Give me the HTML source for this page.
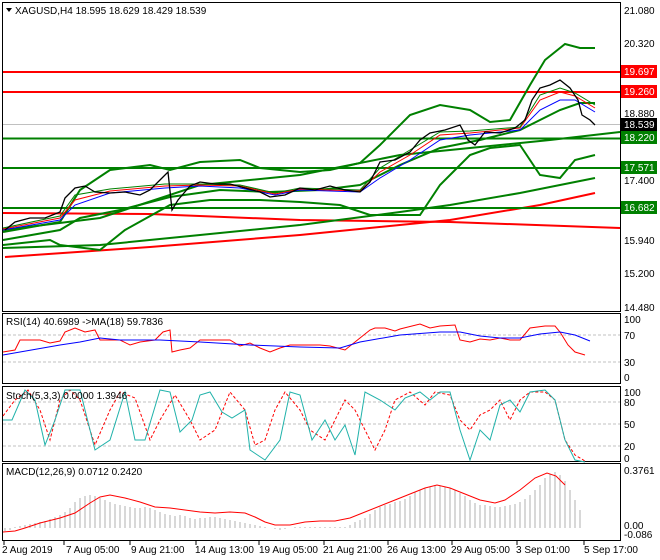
<!DOCTYPE html>
<html><head><meta charset="utf-8"><style>
body{margin:0;background:#fff;width:660px;height:560px;overflow:hidden;font-family:"Liberation Sans",sans-serif}
svg{display:block}
text{font-family:"Liberation Sans",sans-serif;font-size:10px;fill:#000}
</style></head><body>
<svg width="660" height="560" viewBox="0 0 660 560">
<rect width="660" height="560" fill="#fff"/>
<rect x="2.5" y="2.5" width="618" height="309" fill="none" stroke="#000"/>
<rect x="2.5" y="313.5" width="618" height="70" fill="none" stroke="#000"/>
<rect x="2.5" y="386.5" width="618" height="75" fill="none" stroke="#000"/>
<rect x="2.5" y="463.5" width="618" height="77" fill="none" stroke="#000"/>
<line x1="3" y1="124.5" x2="620" y2="124.5" stroke="#c0c0c0"/>
<g stroke="#ff0000" stroke-width="2" fill="none">
<line x1="3" y1="72" x2="620" y2="72"/>
<line x1="3" y1="92" x2="620" y2="92"/>
<polyline points="3,213 150,214 300,220 450,222 620,228"/>
<polyline points="5,257 150,247 300,235 450,220 540,205 595,193"/>
</g>
<g stroke="#008000" stroke-width="2" fill="none">
<line x1="3" y1="138.5" x2="620" y2="138.5"/>
<line x1="3" y1="168" x2="620" y2="168"/>
<line x1="3" y1="208" x2="620" y2="208"/>
<polyline points="3,248 100,245 200,235 300,225 400,212 450,205 520,193 595,178"/>
<polyline points="3,230 100,218 200,185 300,175 400,155 480,147 550,140 620,132"/>
<polyline points="3,245 50,240 60,245 100,250 125,230 170,205 210,200 260,200 300,202 340,205 370,215 420,215 440,185 470,155 490,148 520,145 540,175 560,178 575,160 595,155"/>
<polyline points="3,232 60,222 80,190 110,170 150,165 170,170 200,162 240,160 260,168 300,172 330,170 360,163 380,145 410,115 440,105 470,110 490,122 510,120 530,85 545,60 565,44 580,48 595,48"/>
<polyline points="3,240 60,230 80,218 120,210 170,197 220,190 270,192 320,190 360,185 400,165 440,148 480,140 520,130 560,110 580,103 595,103"/>
</g>
<g fill="none" stroke-width="1">
<polyline stroke="#0000ff" points="3,230 60,220 75,205 110,193 165,188 200,186 240,188 275,195 300,190 360,192 380,178 410,160 440,140 470,135 520,130 540,110 560,100 575,100 595,112"/>
<polyline stroke="#ff0000" points="3,229 60,218 75,200 110,191 165,186 200,185 240,186 275,194 300,189 360,191 380,172 410,155 440,135 470,133 520,128 540,100 560,92 575,96 595,108"/>
<polyline stroke="#008000" points="3,228 60,216 75,195 110,189 165,184 200,184 240,185 275,193 300,188 360,190 380,168 410,150 440,132 470,131 520,127 540,95 560,88 575,93 595,105"/>
</g>
<polyline fill="none" stroke="#000" stroke-width="1.3" points="5,230 15,222 30,218 45,218 60,212 65,198 75,188 85,186 95,192 110,193 125,192 140,195 150,190 160,180 168,172 172,210 178,200 190,186 200,182 215,184 230,184 245,188 260,192 270,197 285,195 300,188 315,190 330,186 345,190 360,192 370,182 380,162 395,160 410,152 420,140 430,133 445,130 460,125 468,140 475,145 485,132 500,133 515,128 525,120 532,100 540,88 550,85 560,80 570,88 578,100 582,115 590,120 595,125"/>
<g>
<rect x="621" y="65" width="36" height="13" fill="#ff0000"/><text x="624" y="75" style="fill:#fff">19.697</text>
<rect x="621" y="85" width="36" height="13" fill="#ff0000"/><text x="624" y="95" style="fill:#fff">19.260</text>
<rect x="621" y="118" width="36" height="13" fill="#000"/><text x="624" y="128" style="fill:#fff">18.539</text>
<rect x="621" y="131" width="36" height="13" fill="#008000"/><text x="624" y="141" style="fill:#fff">18.220</text>
<rect x="621" y="161" width="36" height="13" fill="#008000"/><text x="624" y="171" style="fill:#fff">17.571</text>
<rect x="621" y="201" width="36" height="13" fill="#008000"/><text x="624" y="211" style="fill:#fff">16.682</text>
<text x="624" y="14">21.080</text>
<text x="624" y="47">20.320</text>
<text x="624" y="117">18.880</text>
<text x="624" y="184">17.400</text>
<text x="624" y="244">15.940</text>
<text x="624" y="277">15.200</text>
<text x="624" y="311">14.480</text>
</g>
<polygon points="6,8 12,8 9,12" fill="#000"/>
<text x="15" y="14">XAGUSD,H4  18.595 18.629 18.429 18.539</text>
<g stroke="#c0c0c0" stroke-dasharray="3,2"><line x1="3" y1="335" x2="620" y2="335"/><line x1="3" y1="362" x2="620" y2="362"/></g>
<polyline fill="none" stroke="#ff0000" points="3,352 15,350 20,340 40,340 50,343 60,341 65,332 75,328 85,332 95,330 100,340 110,340 120,340 130,345 140,342 155,340 163,332 170,330 172,352 180,350 190,348 200,340 210,340 230,340 240,346 250,343 260,348 270,352 280,348 290,345 300,345 320,345 330,346 345,350 360,338 370,330 375,328 385,328 395,331 400,329 420,324 430,328 440,326 455,325 460,340 470,342 480,339 490,340 500,338 510,340 520,340 530,328 545,326 555,326 560,332 568,345 575,352 585,355"/>
<polyline fill="none" stroke="#0000ff" points="3,355 20,352 60,345 80,342 100,338 120,340 160,340 200,342 250,345 300,347 340,348 360,342 400,335 440,332 460,332 480,336 500,338 520,338 540,334 560,332 575,335 590,341"/>
<text x="6" y="325">RSI(14) 40.6989  -&gt;MA(18) 59.7836</text>
<text x="624" y="323">100</text><text x="624" y="339">70</text><text x="624" y="366">30</text><text x="624" y="381">0</text>
<g stroke="#c0c0c0" stroke-dasharray="3,2"><line x1="3" y1="402" x2="620" y2="402"/><line x1="3" y1="424" x2="620" y2="424"/><line x1="3" y1="446" x2="620" y2="446"/></g>
<polyline fill="none" stroke="#ff0000" stroke-dasharray="3,2" points="3,416 15,400 28,390 40,410 50,440 60,400 70,390 80,400 95,445 110,410 120,392 135,398 150,440 160,420 175,395 190,420 200,440 215,430 230,392 245,410 255,445 265,440 275,410 285,392 300,410 310,430 325,440 335,420 345,400 355,410 365,430 375,450 385,430 395,400 410,392 425,405 435,392 450,395 460,420 470,430 480,415 490,410 500,400 510,420 520,400 530,392 545,392 555,400 565,440 575,455 585,461"/>
<polyline fill="none" stroke="#20b2aa" points="3,420 12,420 25,390 35,400 45,445 55,420 65,390 80,390 95,450 110,440 125,392 135,440 145,440 160,390 170,392 180,432 192,420 200,395 210,392 222,412 232,418 245,410 250,450 265,460 280,440 290,392 300,395 312,440 325,420 335,440 345,425 355,455 365,392 380,400 395,410 405,398 420,392 430,400 440,392 450,392 460,430 470,460 480,430 490,440 500,405 510,400 520,412 530,392 545,390 555,400 565,440 575,460 585,462"/>
<text x="6" y="399">Stoch(5,3,3) 0.0000 1.3946</text>
<text x="624" y="396">100</text><text x="624" y="406">80</text><text x="624" y="428">50</text><text x="624" y="450">20</text><text x="624" y="462">0</text>
<g stroke="#b0b0b0" stroke-width="1">
<path d="M5,528V531M10,528V530M15,528V527M20,528V526M25,528V525M30,528V524M35,528V523M40,528V522M45,528V521M50,528V519M55,528V517M60,528V515M65,528V512M70,528V508M75,528V502M80,528V498M85,528V496M90,528V495M95,528V496M100,528V498M105,528V500M110,528V502M115,528V504M120,528V505M125,528V506M130,528V507M135,528V508M140,528V508M145,528V507M150,528V508M155,528V510M160,528V512M165,528V514M170,528V515M175,528V516M180,528V515M185,528V516M190,528V518M195,528V519M200,528V518M205,528V518M210,528V517M215,528V517M220,528V518M225,528V519M230,528V520M235,528V521M240,528V522M245,528V523M250,528V524M255,528V525M260,528V526M265,528V527M270,528V528M275,528V529M280,528V530M285,528V529M290,528V528M295,528V527M300,528V527M305,528V527M310,528V527M315,528V527M320,528V527M325,528V527M330,528V527M335,528V527M340,528V527M345,528V527M350,528V525M355,528V522M360,528V520M365,528V518M370,528V514M375,528V510M380,528V507M385,528V505M390,528V504M395,528V502M400,528V501M405,528V499M410,528V496M415,528V492M420,528V490M425,528V488M430,528V487M435,528V486M440,528V486M445,528V487M450,528V488M455,528V490M460,528V493M465,528V496M470,528V500M475,528V503M480,528V505M485,528V505M490,528V506M495,528V507M500,528V507M505,528V506M510,528V505M515,528V504M520,528V502M525,528V499M530,528V495M535,528V490M540,528V485M545,528V478M550,528V474M555,528V472M560,528V475M565,528V481M570,528V490M575,528V500M580,528V510"/>
</g>
<polyline fill="none" stroke="#ff0000" points="3,532 15,531 25,528 40,523 60,518 75,513 90,503 100,497 110,495 125,498 140,502 155,507 170,508 185,510 200,512 215,513 230,512 245,513 255,517 265,522 275,525 290,525 305,522 320,521 335,521 350,518 365,512 380,506 395,500 410,494 425,488 437,485 450,488 465,494 480,500 495,503 505,500 520,490 535,478 547,473 556,476 565,485"/>
<text x="6" y="475">MACD(12,26,9) 0.0712 0.2420</text>
<text x="624" y="474">0.3761</text><text x="624" y="529">0.00</text><text x="624" y="538">-0.086</text>
<g stroke="#000"><path d="M4,541V545M64,541V545M130,541V545M196,541V545M259,541V545M324,541V545M388,541V545M452,541V545M517,541V545M584,541V545"/></g>
<text x="2" y="553">2 Aug 2019</text>
<text x="66" y="553">7 Aug 05:00</text>
<text x="131" y="553">9 Aug 21:00</text>
<text x="195" y="553">14 Aug 13:00</text>
<text x="259" y="553">19 Aug 05:00</text>
<text x="323" y="553">21 Aug 21:00</text>
<text x="387" y="553">26 Aug 13:00</text>
<text x="451" y="553">29 Aug 05:00</text>
<text x="516" y="553">3 Sep 01:00</text>
<text x="584" y="553">5 Sep 17:00</text>
</svg>
</body></html>
